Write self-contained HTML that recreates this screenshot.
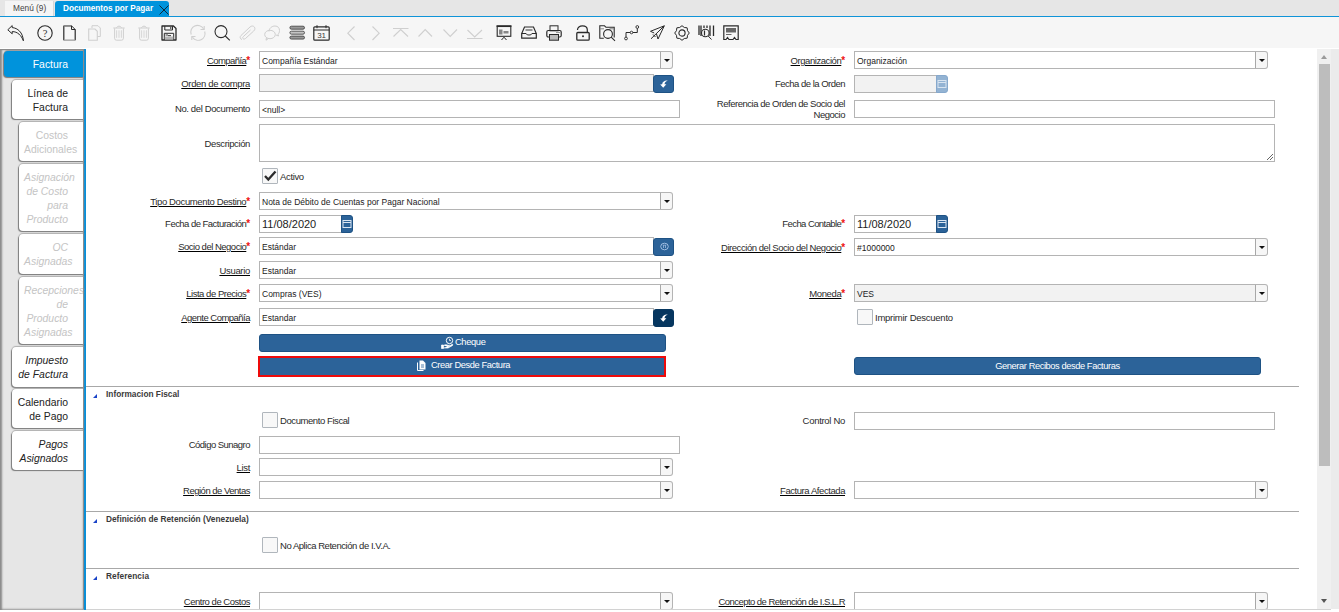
<!DOCTYPE html><html><head><meta charset="utf-8"><title>Documentos por Pagar</title><style>
*{margin:0;padding:0;box-sizing:border-box}
html,body{width:1339px;height:612px;overflow:hidden;background:#fff;font-family:"Liberation Sans", sans-serif;}
body{position:relative}
.ab{position:absolute}
.lbl{position:absolute;text-align:right;white-space:nowrap;font-size:9.5px;letter-spacing:-0.38px;color:#2a2a2a;padding-top:1px}
.lbl u{text-decoration:underline;text-underline-offset:1px;text-decoration-color:#000}
.req{color:#ee1111;font-size:10px;position:relative;top:-0.5px;letter-spacing:-0.2px;margin-left:0px;line-height:0;font-weight:bold}
.inp{position:absolute;border:1px solid #b4b4b4;background:#fff;font-size:8.5px;color:#222;padding-left:2px;padding-top:1px;white-space:nowrap;overflow:hidden}
.dis{background:#f2f2f2}
.cbtn{position:absolute;border:1px solid #b4b4b4;border-left:1px solid #a8a8a8;background:#f6f6f6;border-radius:0 3px 3px 0}
.cbtn:after{content:"";position:absolute;left:3px;top:7px;border-left:3px solid transparent;border-right:3px solid transparent;border-top:3.5px solid #111}
.bbtn{position:absolute;background:#2c6399;border:1px solid #1e5284;border-radius:3px}
.chk{position:absolute;width:16px;height:16px;border:1px solid #b0b6bc;background:#f8f8f8;border-radius:1px}
.chkl{position:absolute;font-size:9.5px;letter-spacing:-0.38px;color:#2a2a2a;white-space:nowrap;padding-top:1px}
.sep{position:absolute;left:86px;width:1213px;height:1px;background:#a8a8a8}
.sec{position:absolute;left:106px;font-size:8.3px;font-weight:bold;color:#3a3a3a;letter-spacing:-0.05px;white-space:nowrap}
.tri{position:absolute;width:0;height:0;border-left:4px solid transparent;border-bottom:4px solid #1a44c8}
.ltab{position:absolute;background:#fff;border-radius:4px 0 0 4px;box-shadow:-1px 1px 1px #7a7a7a, 0 -0.5px 1px #b0b0b0;font-size:10.4px;line-height:14px;text-align:right;color:#222;padding:0 16px 0 5px;white-space:nowrap}
.ltab div{white-space:nowrap}
.gray{color:#c4c4c4}
.it{font-style:italic}
.tb{position:absolute;top:25px}
</style></head><body>
<div class="ab" style="left:0;top:0;width:1339px;height:16px;background:#e6e6e6"></div>
<div class="ab" style="left:0;top:16px;width:1339px;height:1px;background:#0f94d8"></div>
<div class="ab" style="left:5px;top:1px;width:49px;height:15px;background:#f5f5f5;border-right:1px solid #d6d6d6"></div>
<div class="ab" style="left:13px;top:1px;height:15px;line-height:15px;font-size:8.3px;color:#444">Menú (9)</div>
<div class="ab" style="left:55px;top:1px;width:114px;height:16px;background:#0093dc;border-radius:3px 3px 0 0"></div>
<div class="ab" style="left:63px;top:1px;height:15px;line-height:15px;font-size:8.2px;font-weight:bold;color:#fff">Documentos por Pagar</div>
<svg class="ab" style="left:159px;top:5px" width="10" height="10" viewBox="0 0 10 10"><path d="M0.5 0.5L9.5 9.5M9.5 0.5L0.5 9.5" stroke="#0d2a3a" stroke-width="1"/></svg>
<div class="ab" style="left:0;top:17px;width:1339px;height:31px;background:#f6f6f6"></div>
<svg class="ab" style="left:7px;top:25px;overflow:visible" width="17" height="16" viewBox="0 0 17 16" fill="none"><path d="M0.8 4.8 L5.2 0.6 L5.2 2.6 C10.5 3 15.8 7.2 16.4 15.8 C14.2 10.2 10.5 6.6 5.2 6.6 L5.2 8.8 Z" stroke="#2a2a2a" stroke-width="1" stroke-linejoin="round"/></svg>
<svg class="ab" style="left:37px;top:25px;overflow:visible" width="16" height="16" viewBox="0 0 16 16" fill="none"><circle cx="8" cy="8" r="7.2" stroke="#2a2a2a" stroke-width="1.1"/><text x="8" y="11.6" font-size="10.5" text-anchor="middle" fill="#333" font-family="Liberation Serif">?</text></svg>
<svg class="ab" style="left:63px;top:25px;overflow:visible" width="13" height="16" viewBox="0 0 13 16" fill="none"><path d="M0.8 0.8 H8.5 M12.2 4.5 V15.2 M0.8 15.2 V0.8" stroke="#2a2a2a" stroke-width="1.2"/><path d="M0.8 0.8 H8.5 M0.8 15.2 H12.2" stroke="#999" stroke-width="1.2"/><path d="M8.5 0.8 L12.2 4.5 M8.5 0.8 V4.5 H12.2" stroke="#2a2a2a" stroke-width="1"/></svg>
<svg class="ab" style="left:88px;top:25px;overflow:visible" width="13" height="16" viewBox="0 0 13 16" fill="none"><path d="M4 3 V0.7 H10 L12.3 3 V11.5 H9.3" stroke="#cfcfcf" stroke-width="1"/><path d="M0.7 4 H7 L9.3 6.3 V15.3 H0.7 Z" stroke="#cfcfcf" stroke-width="1.1"/></svg>
<svg class="ab" style="left:113px;top:25px;overflow:visible" width="12" height="16" viewBox="0 0 12 16" fill="none"><path d="M0.3 3 H11.7 M3.3 2.8 Q6 -0.6 8.7 2.8" stroke="#cfcfcf" stroke-width="1"/><path d="M1.6 3.3 V13.3 Q1.6 15.2 3.5 15.2 H8.5 Q10.4 15.2 10.4 13.3 V3.3" stroke="#cfcfcf" stroke-width="1"/><path d="M3.6 5.3 V12.8 M6 5.3 V12.8 M8.4 5.3 V12.8" stroke="#d2d2d2" stroke-width="0.9"/></svg>
<svg class="ab" style="left:138px;top:25px;overflow:visible" width="12" height="16" viewBox="0 0 12 16" fill="none"><path d="M0.3 3 H11.7 M3.3 2.8 Q6 -0.6 8.7 2.8" stroke="#cfcfcf" stroke-width="1"/><path d="M1.6 3.3 V13.3 Q1.6 15.2 3.5 15.2 H8.5 Q10.4 15.2 10.4 13.3 V3.3" stroke="#cfcfcf" stroke-width="1"/><path d="M3.6 5.3 V12.8 M6 5.3 V12.8 M8.4 5.3 V12.8" stroke="#d2d2d2" stroke-width="0.9"/></svg>
<svg class="ab" style="left:161px;top:25px;overflow:visible" width="16" height="16" viewBox="0 0 16 16" fill="none"><path d="M1 1 H12.5 L15 3.5 V15 H1 Z" stroke="#2a2a2a" stroke-width="1.3" stroke-linejoin="round"/><path d="M3.8 1.2 V5 H11.5 V1.2" stroke="#2a2a2a" stroke-width="1"/><path d="M9.8 1.8 V4" stroke="#2a2a2a" stroke-width="1"/><path d="M3.3 15 V8.3 H12.7 V15" stroke="#2a2a2a" stroke-width="1"/><rect x="3.8" y="11.5" width="8.5" height="3.2" fill="#b5b5b5"/><path d="M4.5 10 H7 M7 10.6 H10" stroke="#2a2a2a" stroke-width="0.9"/></svg>
<svg class="ab" style="left:190px;top:25px;overflow:visible" width="16" height="16" viewBox="0 0 16 16" fill="none"><path d="M1.2 9.5 A6.8 6.8 0 0 1 13.5 3.8" stroke="#cfcfcf" stroke-width="1.1"/><path d="M14.7 6.5 A6.8 6.8 0 0 1 2.5 12.2" stroke="#cfcfcf" stroke-width="1.1"/><path d="M14.2 1 V4.5 H10.5 M1.8 15 V11.5 H5.5" stroke="#cfcfcf" stroke-width="1.1"/></svg>
<svg class="ab" style="left:214px;top:25px;overflow:visible" width="17" height="16" viewBox="0 0 17 16" fill="none"><circle cx="7" cy="6.6" r="6" stroke="#2a2a2a" stroke-width="1.05"/><path d="M11.3 11 L15.8 15.3" stroke="#2a2a2a" stroke-width="1.1"/></svg>
<svg class="ab" style="left:239px;top:25px;overflow:visible" width="17" height="16" viewBox="0 0 17 16" fill="none"><path d="M3 14.6 C1 13.8 0.5 12 2 10.5 L11 2 C12.5 0.6 14.6 0.8 15.5 2.2 C16.4 3.6 15.8 5 14.6 6.1 L6.5 13.5 C5.5 14.3 4.5 14.2 4 13.6 C3.5 13 3.6 12.2 4.3 11.6 L11.5 5" stroke="#cfcfcf" stroke-width="1"/></svg>
<svg class="ab" style="left:264px;top:25px;overflow:visible" width="16" height="16" viewBox="0 0 16 16" fill="none"><path d="M5 6.5 C5 3.2 8 1 11 1 C14 1 15.5 3 15.5 5.5 C15.5 7.5 14.8 8.5 14 9.2 L14.5 11 L12 10" stroke="#cfcfcf" stroke-width="1"/><ellipse cx="6" cy="9.5" rx="5.3" ry="4.2" stroke="#cfcfcf" stroke-width="1"/><path d="M2.5 12.7 L2 15.2 L4.5 13.5" stroke="#cfcfcf" stroke-width="1"/></svg>
<svg class="ab" style="left:289px;top:25px;overflow:visible" width="17" height="16" viewBox="0 0 17 16" fill="none"><rect x="0.9" y="1.2" width="14.6" height="3.0" rx="1.5" fill="#999" stroke="#3a3a3a" stroke-width="0.8"/><rect x="0.9" y="6.2" width="14.6" height="3.0" rx="1.5" fill="#c4c4c4" stroke="#3a3a3a" stroke-width="0.8"/><rect x="0.9" y="11.1" width="14.6" height="3.0" rx="1.5" fill="#999" stroke="#3a3a3a" stroke-width="0.8"/></svg>
<svg class="ab" style="left:313px;top:25px;overflow:visible" width="17" height="16" viewBox="0 0 17 16" fill="none"><rect x="0.8" y="1.8" width="15.4" height="13.4" rx="1" stroke="#2a2a2a" stroke-width="1.2"/><path d="M0.8 5 H16.2" stroke="#2a2a2a" stroke-width="1"/><path d="M4 0.2 V3.2 M13 0.2 V3.2" stroke="#2a2a2a" stroke-width="1"/><text x="8.6" y="13.3" font-size="8" text-anchor="middle" fill="#3a3a3a" font-family="Liberation Sans">31</text></svg>
<svg class="ab" style="left:347px;top:26px;overflow:visible" width="8" height="15" viewBox="0 0 8 15" fill="none"><path d="M7.5 0.5 L0.8 7.2 L7.5 14" stroke="#cfcfcf" stroke-width="1.1"/></svg>
<svg class="ab" style="left:372px;top:26px;overflow:visible" width="8" height="15" viewBox="0 0 8 15" fill="none"><path d="M0.5 0.5 L7.2 7.2 L0.5 14" stroke="#cfcfcf" stroke-width="1.1"/></svg>
<svg class="ab" style="left:393px;top:28px;overflow:visible" width="16" height="10" viewBox="0 0 16 10" fill="none"><path d="M0 0.5 H15.5 M0.5 8.5 L7.7 1.5 L15 8.5" stroke="#cfcfcf" stroke-width="1.1"/></svg>
<svg class="ab" style="left:418px;top:28px;overflow:visible" width="15" height="10" viewBox="0 0 15 10" fill="none"><path d="M0.5 8.5 L7.2 1.5 L14 8.5" stroke="#cfcfcf" stroke-width="1.1"/></svg>
<svg class="ab" style="left:443px;top:28px;overflow:visible" width="15" height="10" viewBox="0 0 15 10" fill="none"><path d="M0.5 1.5 L7.2 8.5 L14 1.5" stroke="#cfcfcf" stroke-width="1.1"/></svg>
<svg class="ab" style="left:467px;top:29px;overflow:visible" width="16" height="11" viewBox="0 0 16 11" fill="none"><path d="M0.5 1 L7.7 8 L15 1 M0 9.5 H15.5" stroke="#cfcfcf" stroke-width="1.1"/></svg>
<svg class="ab" style="left:496px;top:25px;overflow:visible" width="16" height="16" viewBox="0 0 16 16" fill="none"><path d="M0.5 1 H15.5" stroke="#2a2a2a" stroke-width="1.6"/><rect x="1.2" y="1.5" width="13.6" height="9.8" stroke="#2a2a2a" stroke-width="1.1"/><rect x="3" y="4.5" width="3.5" height="5" fill="#888"/><rect x="7.5" y="6" width="5" height="2.5" fill="#888"/><path d="M5.5 15 L8 12.2 L10.5 15" stroke="#2a2a2a" stroke-width="1"/></svg>
<svg class="ab" style="left:521px;top:26px;overflow:visible" width="16" height="13" viewBox="0 0 16 13" fill="none"><path d="M0.7 12.2 V7.5 L3.5 1 H12.5 L15.3 7.5 V12.2 Z" stroke="#2a2a2a" stroke-width="1.2"/><path d="M0.7 7.5 H5 C5.5 9.5 10.5 9.5 11 7.5 H15.3" stroke="#2a2a2a" stroke-width="1"/><path d="M4.5 4 H11.5" stroke="#777" stroke-width="1.5"/></svg>
<svg class="ab" style="left:546px;top:25px;overflow:visible" width="16" height="16" viewBox="0 0 16 16" fill="none"><rect x="4" y="0.8" width="8" height="5" stroke="#2a2a2a" stroke-width="1"/><rect x="0.8" y="5.5" width="14.4" height="6.5" rx="1.5" stroke="#2a2a2a" stroke-width="1.2"/><rect x="3.5" y="9.5" width="9" height="5.7" fill="#bbb" stroke="#2a2a2a" stroke-width="1"/><circle cx="11" cy="7.5" r="0.6" fill="#2a2a2a"/><circle cx="13" cy="7.5" r="0.6" fill="#2a2a2a"/></svg>
<svg class="ab" style="left:576px;top:25px;overflow:visible" width="14" height="16" viewBox="0 0 14 16" fill="none"><path d="M1.5 5 V4.8 C1.5 2.5 3.6 0.8 6.5 0.8 C9.3 0.8 11.3 2.5 11.3 4.8 V7.5" stroke="#2a2a2a" stroke-width="1.2"/><rect x="0.8" y="7.5" width="12.4" height="7.7" rx="1" stroke="#2a2a2a" stroke-width="1.3"/><circle cx="7" cy="11.2" r="1" fill="#2a2a2a"/></svg>
<svg class="ab" style="left:599px;top:25px;overflow:visible" width="17" height="16" viewBox="0 0 17 16" fill="none"><path d="M4.8 13.3 H0.8 V0.8 H5.5 L7 2.3 H15.2 V12.5" stroke="#2a2a2a" stroke-width="1.1"/><path d="M1 3.8 H5 M10.5 3.8 H15" stroke="#888" stroke-width="1"/><circle cx="9" cy="9" r="4.4" stroke="#2a2a2a" stroke-width="1.1"/><path d="M12.2 12.2 L16 15.8" stroke="#2a2a2a" stroke-width="1.1"/></svg>
<svg class="ab" style="left:624px;top:25px;overflow:visible" width="16" height="16" viewBox="0 0 16 16" fill="none"><circle cx="13.3" cy="2" r="1.4" stroke="#2a2a2a" stroke-width="0.9"/><circle cx="2" cy="13.5" r="1.4" stroke="#2a2a2a" stroke-width="0.9"/><circle cx="7.5" cy="7.5" r="1.3" stroke="#2a2a2a" stroke-width="0.9"/><path d="M13.3 3.4 V7.5 H8.8 M6.2 7.5 H2 V12.1" stroke="#2a2a2a" stroke-width="1"/></svg>
<svg class="ab" style="left:650px;top:25px;overflow:visible" width="15" height="15" viewBox="0 0 15 15" fill="none"><path d="M14.3 0.8 L0.5 6.3 L4.2 8 M14.3 0.8 L8 14 L6.5 9 M14.3 0.8 L1 13.8 M3 9.5 L5.5 12" stroke="#2a2a2a" stroke-width="1"/></svg>
<svg class="ab" style="left:674px;top:25px;overflow:visible" width="16" height="16" viewBox="0 0 16 16" fill="none"><polygon points="15.30,8.00 13.54,10.30 13.16,13.16 10.30,13.54 8.00,15.30 5.70,13.54 2.84,13.16 2.46,10.30 0.70,8.00 2.46,5.70 2.84,2.84 5.70,2.46 8.00,0.70 10.30,2.46 13.16,2.84 13.54,5.70" stroke="#2a2a2a" stroke-width="1" stroke-linejoin="round"/><circle cx="8" cy="8" r="3.1" stroke="#2a2a2a" stroke-width="1.1"/></svg>
<svg class="ab" style="left:698px;top:25px;overflow:visible" width="17" height="15" viewBox="0 0 17 15" fill="none"><path d="M1 0.5 V10 M3 0.5 V11 M6 0.5 V3 M9 0.5 V3 M12 0.5 V11 M15.5 0.5 V11" stroke="#2a2a2a" stroke-width="1.3"/><circle cx="7.3" cy="8" r="3.8" stroke="#2a2a2a" stroke-width="1.1" fill="#f6f6f6"/><path d="M6.5 5.5 V10.5" stroke="#2a2a2a" stroke-width="1.2"/><path d="M10.2 11 L13.5 14.5" stroke="#2a2a2a" stroke-width="1"/></svg>
<svg class="ab" style="left:723px;top:25px;overflow:visible" width="16" height="16" viewBox="0 0 16 16" fill="none"><path d="M0.8 0.8 H15.2 V14.5 L13 14.5 L11.5 12.5 L10 14.5 H6 L4.5 12.5 L3 14.5 H0.8 Z" stroke="#2a2a2a" stroke-width="1.2"/><rect x="3" y="3" width="10" height="4.5" fill="#666"/><path d="M3 9.5 H8.5" stroke="#666" stroke-width="1"/></svg>
<div class="ab" style="left:0;top:49px;width:84px;height:561px;background:#e6e6e6;box-shadow:inset 2px 1px 2px #8a8a8a, inset -1px -1px 2px #9a9a9a"></div>
<div class="ab" style="left:84px;top:49px;width:2px;height:561px;background:#0a8ed6"></div>
<div class="ltab " style="left:4px;top:51px;width:80px;height:26px;background:#0093dc;color:#fff;box-shadow:-1px 1px 1px #7a7a7a, 0 -1px 1px #9a9a9a;padding-top:7.0px;">
<div>Factura</div>
</div>
<div class="ltab " style="left:12px;top:80px;width:72px;height:39px;padding-top:6.5px;">
<div>Línea de</div>
<div>Factura</div>
</div>
<div class="ltab gray" style="left:19px;top:122px;width:65px;height:39px;padding-top:6.5px;">
<div>Costos</div>
<div>Adicionales</div>
</div>
<div class="ltab gray it" style="left:19px;top:164px;width:65px;height:67px;padding-top:6.5px;">
<div>Asignación</div>
<div>de Costo</div>
<div>para</div>
<div>Producto</div>
</div>
<div class="ltab gray it" style="left:19px;top:234px;width:65px;height:40px;padding-top:7.0px;">
<div>OC</div>
<div>Asignadas</div>
</div>
<div class="ltab gray it" style="left:19px;top:277px;width:65px;height:67px;padding-top:6.5px;">
<div>Recepciones</div>
<div>de</div>
<div>Producto</div>
<div>Asignadas</div>
</div>
<div class="ltab it" style="left:12px;top:347px;width:72px;height:40px;padding-top:7.0px;">
<div>Impuesto</div>
<div>de Factura</div>
</div>
<div class="ltab " style="left:12px;top:389px;width:72px;height:39px;padding-top:6.5px;">
<div>Calendario</div>
<div>de Pago</div>
</div>
<div class="ltab it" style="left:12px;top:431px;width:72px;height:39px;padding-top:6.5px;">
<div>Pagos</div>
<div>Asignados</div>
</div>
<div class="ab" style="left:83px;top:49px;width:1px;height:560px;background:#8c8c8c"></div>
<div class="ab" style="left:0;top:49px;width:84px;height:1px;background:#8c8c8c"></div>
<div class="lbl" style="left:-150px;width:400px;top:51px;height:18px;line-height:18px;letter-spacing:0"><u style="letter-spacing:-0.568px;">Compañía</u><span class="req">*</span></div>
<div class="inp" style="left:259px;top:51px;width:402px;height:18px;line-height:16px;">Compañía Estándar</div>
<div class="cbtn" style="left:660px;top:51px;width:13px;height:18px"></div>
<div class="lbl" style="left:445px;width:400px;top:51px;height:18px;line-height:18px;letter-spacing:0"><u style="letter-spacing:-0.440px;">Organización</u><span class="req">*</span></div>
<div class="inp" style="left:854px;top:51px;width:402px;height:18px;line-height:16px;">Organización</div>
<div class="cbtn" style="left:1255px;top:51px;width:13px;height:18px"></div>
<div class="lbl" style="left:-150px;width:400px;top:74px;height:18px;line-height:18px;letter-spacing:0"><u style="letter-spacing:-0.349px;">Orden de compra</u></div>
<div class="inp dis" style="left:259px;top:74px;width:395px;height:18px;line-height:16px;"></div>
<div class="bbtn" style="left:653px;top:75px;width:21px;height:18px;"></div>
<svg class="ab" style="left:660.3px;top:79.7px" width="8" height="8" viewBox="0 0 8 8"><path d="M7.8 0.5 C4.5 0.1 2.1 2.0 2.2 4.3 L0.2 4.4 L3.2 7.7 L6.4 4.3 L4.5 4.3 C4.5 2.8 5.8 1.2 7.8 0.5 Z" fill="#fff"/></svg>
<div class="lbl" style="left:445px;width:400px;top:74px;height:18px;line-height:18px;letter-spacing:0"><span style="letter-spacing:-0.511px;">Fecha de la Orden</span></div>
<div style_fix="1" class="inp dis" style="left:854px;top:75px;width:83px;height:18px;line-height:15px;font-size:11px;"></div>
<div class="ab" style="left:936px;top:75px;width:12px;height:18px;background:#93b3d3;border:1px solid #86a8cc;border-radius:0 3px 3px 0"></div>
<svg class="ab" style="left:937px;top:79px" width="10" height="10" viewBox="0 0 10 10"><rect x="1" y="1.5" width="8" height="7" stroke="#d8e4f0" stroke-width="1" fill="none"/><path d="M1 3.5 H9" stroke="#d8e4f0" stroke-width="1"/></svg>
<div class="lbl" style="left:-150px;width:400px;top:99px;height:18px;line-height:18px;letter-spacing:0"><span style="letter-spacing:-0.366px;">No. del Documento</span></div>
<div class="inp" style="left:259px;top:100px;width:421px;height:18px;line-height:16px;">&lt;null&gt;</div>
<div class="lbl" style="left:445px;width:400px;top:97px;line-height:11px;letter-spacing:0"><span style="letter-spacing:-0.466px;">Referencia de Orden de Socio del</span><br><span style="letter-spacing:-0.480px;">Negocio</span></div>
<div class="inp" style="left:854px;top:100px;width:421px;height:18px;line-height:16px;"></div>
<div class="lbl" style="left:-150px;width:400px;top:124px;height:38px;line-height:38px;letter-spacing:0"><span style="letter-spacing:-0.386px;">Descripción</span></div>
<div class="inp" style="left:259px;top:124px;width:1016px;height:38px;line-height:36px;"></div>
<svg class="ab" style="left:1266px;top:153px" width="8" height="8" viewBox="0 0 8 8"><path d="M7 1 L1 7 M7 4 L4 7" stroke="#555" stroke-width="0.9"/></svg>
<div class="chk" style="left:262px;top:168px"></div>
<svg class="ab" style="left:263px;top:169px" width="14" height="14" viewBox="0 0 14 14"><path d="M2 7 L5.3 10.5 L12.5 2.5" stroke="#2b2b2b" stroke-width="2.3" fill="none"/></svg>
<div class="chkl" style="left:280px;top:168px;height:16px;line-height:16px;letter-spacing:-0.346px;">Activo</div>
<div class="lbl" style="left:-150px;width:400px;top:192px;height:18px;line-height:18px;letter-spacing:0"><u style="letter-spacing:-0.368px;">Tipo Documento Destino</u><span class="req">*</span></div>
<div class="inp" style="left:259px;top:192px;width:402px;height:18px;line-height:16px;">Nota de Débito de Cuentas por Pagar Nacional</div>
<div class="cbtn" style="left:660px;top:192px;width:13px;height:18px"></div>
<div class="lbl" style="left:-150px;width:400px;top:214px;height:18px;line-height:18px;letter-spacing:0"><span style="letter-spacing:-0.535px;">Fecha de Facturación</span><span class="req">*</span></div>
<div style_fix="1" class="inp" style="left:259px;top:215px;width:83px;height:18px;line-height:15px;font-size:11px;">11/08/2020</div>
<div class="ab" style="left:341px;top:215px;width:12px;height:18px;background:#2c6399;border:1px solid #1e5284;border-radius:0 3px 3px 0"></div>
<svg class="ab" style="left:342px;top:219px" width="10" height="10" viewBox="0 0 10 10"><rect x="1" y="1.5" width="8" height="7" stroke="#dbe6f2" stroke-width="1" fill="none"/><path d="M1 3.5 H9" stroke="#dbe6f2" stroke-width="1"/></svg>
<div class="lbl" style="left:445px;width:400px;top:214px;height:18px;line-height:18px;letter-spacing:0"><span style="letter-spacing:-0.577px;">Fecha Contable</span><span class="req">*</span></div>
<div style_fix="1" class="inp" style="left:854px;top:215px;width:83px;height:18px;line-height:15px;font-size:11px;">11/08/2020</div>
<div class="ab" style="left:936px;top:215px;width:12px;height:18px;background:#2c6399;border:1px solid #1e5284;border-radius:0 3px 3px 0"></div>
<svg class="ab" style="left:937px;top:219px" width="10" height="10" viewBox="0 0 10 10"><rect x="1" y="1.5" width="8" height="7" stroke="#dbe6f2" stroke-width="1" fill="none"/><path d="M1 3.5 H9" stroke="#dbe6f2" stroke-width="1"/></svg>
<div class="lbl" style="left:-150px;width:400px;top:237px;height:18px;line-height:18px;letter-spacing:0"><u style="letter-spacing:-0.499px;">Socio del Negocio</u><span class="req">*</span></div>
<div class="inp" style="left:259px;top:237px;width:395px;height:18px;line-height:16px;">Estándar</div>
<div class="bbtn" style="left:653px;top:238px;width:21px;height:18px;"></div>
<svg class="ab" style="left:659.5px;top:241.5px" width="9" height="9" viewBox="0 0 9 9"><ellipse cx="4.5" cy="4.5" rx="3.8" ry="3.3" stroke="#9ebce0" stroke-width="1" fill="none"/><path d="M2.8 3.2 H6.2 M3.5 3.2 V6 M5.5 3.2 V6" stroke="#9ebce0" stroke-width="0.8" fill="none"/></svg>
<div class="lbl" style="left:445px;width:400px;top:238px;height:18px;line-height:18px;letter-spacing:0"><u style="letter-spacing:-0.446px;">Dirección del Socio del Negocio</u><span class="req">*</span></div>
<div class="inp" style="left:854px;top:238px;width:402px;height:18px;line-height:16px;">#1000000</div>
<div class="cbtn" style="left:1255px;top:238px;width:13px;height:18px"></div>
<div class="lbl" style="left:-150px;width:400px;top:261px;height:18px;line-height:18px;letter-spacing:0"><u style="letter-spacing:-0.307px;">Usuario</u></div>
<div class="inp" style="left:259px;top:261px;width:402px;height:18px;line-height:16px;">Estandar</div>
<div class="cbtn" style="left:660px;top:261px;width:13px;height:18px"></div>
<div class="lbl" style="left:-150px;width:400px;top:284px;height:18px;line-height:18px;letter-spacing:0"><u style="letter-spacing:-0.468px;">Lista de Precios</u><span class="req">*</span></div>
<div class="inp" style="left:259px;top:284px;width:402px;height:18px;line-height:16px;">Compras (VES)</div>
<div class="cbtn" style="left:660px;top:284px;width:13px;height:18px"></div>
<div class="lbl" style="left:445px;width:400px;top:284px;height:18px;line-height:18px;letter-spacing:0"><u style="letter-spacing:-0.374px;">Moneda</u><span class="req">*</span></div>
<div class="inp dis" style="left:854px;top:284px;width:402px;height:18px;line-height:16px;">VES</div>
<div class="cbtn" style="left:1255px;top:284px;width:13px;height:18px"></div>
<div class="lbl" style="left:-150px;width:400px;top:308px;height:18px;line-height:18px;letter-spacing:0"><u style="letter-spacing:-0.520px;">Agente Compañía</u></div>
<div class="inp" style="left:259px;top:308px;width:395px;height:18px;line-height:16px;">Estandar</div>
<div class="bbtn" style="left:653px;top:309px;width:21px;height:18px;background:#06365f;border-color:#06365f;"></div>
<svg class="ab" style="left:660.3px;top:313.7px" width="8" height="8" viewBox="0 0 8 8"><path d="M7.8 0.5 C4.5 0.1 2.1 2.0 2.2 4.3 L0.2 4.4 L3.2 7.7 L6.4 4.3 L4.5 4.3 C4.5 2.8 5.8 1.2 7.8 0.5 Z" fill="#fff"/></svg>
<div class="chk" style="left:857px;top:309px"></div>
<div class="chkl" style="left:875px;top:309px;height:16px;line-height:16px;letter-spacing:-0.253px;">Imprimir Descuento</div>
<div class="ab" style="left:259px;top:334px;width:407px;height:18px;background:#2c6399;border-radius:3px;border:1px solid #1e5284"></div>
<svg class="ab" style="left:441px;top:336px" width="13" height="13" viewBox="0 0 13 13"><circle cx="8.5" cy="4.5" r="3.2" stroke="#fff" stroke-width="1" fill="none"/><path d="M8.5 2.8 V4.6 H10" stroke="#fff" stroke-width="0.8" fill="none"/><path d="M0.5 9 H2.5 V12.5 H0.5 Z M2.5 9.5 C4 8.5 5.5 8.5 7 9.3 L9 9.3 C10 9.3 10 10.5 9 10.5 L6 10.5 M2.5 12 L7 12 L11.5 9.5 C12.3 9 11.8 8 11 8.5 L9.5 9.3" fill="#fff" stroke="#fff" stroke-width="0.7"/></svg>
<div class="ab" style="left:455px;top:334px;height:18px;line-height:17px;font-size:9.3px;letter-spacing:-0.346px;color:#fff">Cheque</div>
<div class="ab" style="left:258px;top:356px;width:408px;height:21px;background:#2c6399;border:2px solid #ee0a0a"></div>
<svg class="ab" style="left:417px;top:360px" width="9" height="11" viewBox="0 0 9 11"><path d="M2.5 0.5 H6 L8.5 3 V9.5 H2.5 Z" fill="#fff"/><path d="M0.5 2.5 V10.5 H6.5" stroke="#fff" stroke-width="1" fill="none"/><path d="M4 5 H7 M4 7 H7" stroke="#2c6399" stroke-width="0.8"/></svg>
<div class="ab" style="left:431px;top:356px;height:21px;line-height:19px;font-size:9.3px;letter-spacing:-0.406px;color:#fff">Crear Desde Factura</div>
<div class="ab" style="left:854px;top:357px;width:407px;height:18px;background:#2c6399;border-radius:3px;border:1px solid #1e5284;text-align:center;line-height:16px;font-size:9.3px;letter-spacing:-0.418px;color:#fff">Generar Recibos desde Facturas</div>
<div class="sep" style="top:386px"></div>
<div class="tri" style="left:93px;top:394px"></div>
<div class="sec" style="top:387px;height:14px;line-height:14px;letter-spacing:0.005px;">Informacion Fiscal</div>
<div class="chk" style="left:262px;top:412px"></div>
<div class="chkl" style="left:280px;top:412px;height:16px;line-height:16px;letter-spacing:-0.421px;">Documento Fiscal</div>
<div class="lbl" style="left:445px;width:400px;top:411px;height:18px;line-height:18px;letter-spacing:0"><span style="letter-spacing:-0.302px;">Control No</span></div>
<div class="inp" style="left:854px;top:412px;width:421px;height:18px;line-height:16px;"></div>
<div class="lbl" style="left:-150px;width:400px;top:435px;height:18px;line-height:18px;letter-spacing:0"><span style="letter-spacing:-0.527px;">Código Sunagro</span></div>
<div class="inp" style="left:259px;top:436px;width:421px;height:18px;line-height:16px;"></div>
<div class="lbl" style="left:-150px;width:400px;top:458px;height:18px;line-height:18px;letter-spacing:0"><u style="letter-spacing:-0.349px;">List</u></div>
<div class="inp" style="left:259px;top:458px;width:402px;height:18px;line-height:16px;"></div>
<div class="cbtn" style="left:660px;top:458px;width:13px;height:18px"></div>
<div class="lbl" style="left:-150px;width:400px;top:481px;height:18px;line-height:18px;letter-spacing:0"><u style="letter-spacing:-0.507px;">Región de Ventas</u></div>
<div class="inp" style="left:259px;top:481px;width:402px;height:18px;line-height:16px;"></div>
<div class="cbtn" style="left:660px;top:481px;width:13px;height:18px"></div>
<div class="lbl" style="left:445px;width:400px;top:481px;height:18px;line-height:18px;letter-spacing:0"><u style="letter-spacing:-0.427px;">Factura Afectada</u></div>
<div class="inp" style="left:854px;top:481px;width:402px;height:18px;line-height:16px;"></div>
<div class="cbtn" style="left:1255px;top:481px;width:13px;height:18px"></div>
<div class="sep" style="top:511px"></div>
<div class="tri" style="left:93px;top:519px"></div>
<div class="sec" style="top:512px;height:14px;line-height:14px;letter-spacing:0.007px;">Definición de Retención (Venezuela)</div>
<div class="chk" style="left:262px;top:537px"></div>
<div class="chkl" style="left:280px;top:537px;height:16px;line-height:16px;letter-spacing:-0.457px;">No Aplica Retención de I.V.A.</div>
<div class="sep" style="top:568px"></div>
<div class="tri" style="left:93px;top:576px"></div>
<div class="sec" style="top:569px;height:14px;line-height:14px;letter-spacing:0.066px;">Referencia</div>
<div class="lbl" style="left:-150px;width:400px;top:592px;height:18px;line-height:18px;letter-spacing:0"><u style="letter-spacing:-0.484px;">Centro de Costos</u></div>
<div class="inp" style="left:259px;top:592px;width:402px;height:18px;line-height:16px;"></div>
<div class="cbtn" style="left:660px;top:592px;width:13px;height:18px"></div>
<div class="lbl" style="left:445px;width:400px;top:592px;height:18px;line-height:18px;letter-spacing:0"><u style="letter-spacing:-0.553px;">Concepto de Retención de I.S.L.R</u></div>
<div class="inp" style="left:854px;top:592px;width:402px;height:18px;line-height:16px;"></div>
<div class="cbtn" style="left:1255px;top:592px;width:13px;height:18px"></div>
<div class="ab" style="left:86px;top:609px;width:1245px;height:1px;background:#d2d2d2"></div>
<div class="ab" style="left:0;top:610px;width:1339px;height:2px;background:#fff"></div>
<div class="ab" style="left:1317px;top:49px;width:22px;height:560px;background:#ebebeb"></div>
<div class="ab" style="left:1317px;top:49px;width:14px;height:560px;background:#f0f0f0"></div>
<div class="ab" style="left:1321px;top:55px;width:0;height:0;border-left:3.5px solid transparent;border-right:3.5px solid transparent;border-bottom:4px solid #9a9a9a"></div>
<div class="ab" style="left:1319px;top:64px;width:11px;height:402px;background:#bdbdbd"></div>
<div class="ab" style="left:1321px;top:599px;width:0;height:0;border-left:3.5px solid transparent;border-right:3.5px solid transparent;border-top:4px solid #555"></div>
</body></html>
